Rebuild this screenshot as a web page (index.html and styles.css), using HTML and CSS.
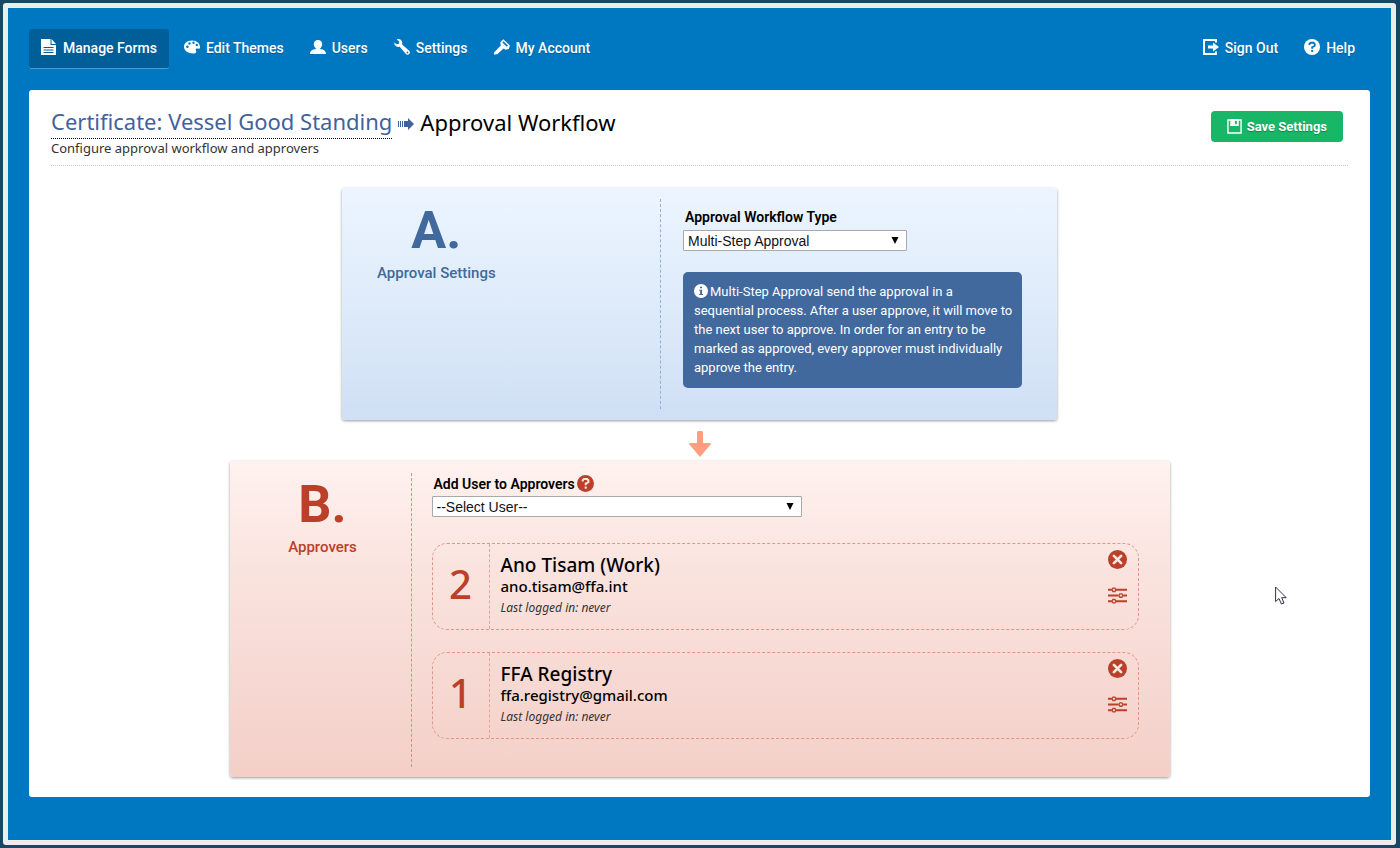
FILE: index.html
```html
<!DOCTYPE html>
<html lang="en">
<head>
<meta charset="utf-8">
<meta name="viewport" content="width=device-width, initial-scale=1">
<title>Approval Workflow</title>
<link rel="stylesheet" href="styles.css">
</head>
<body>
<svg class="sprite" aria-hidden="true">
  <symbol id="help" viewBox="0 0 16 16"><circle cx="8" cy="8" r="8" fill="currentColor"/><path class="cut" d="M5.4 6.1V4.8L6.6 3.7H9.5L10.7 4.9V6.8L8.2 8.2V9.7" fill="none" stroke-width="1.9"/><path class="cut" d="M8.2 10.9V12.9" fill="none" stroke-width="2"/></symbol>
  <symbol id="remove" viewBox="0 0 20 20"><circle cx="10" cy="10" r="10" fill="currentColor"/><path class="cut" d="M6.2 6.2 13.8 13.8M13.8 6.2 6.2 13.8" stroke-width="2.8" stroke-linecap="round"/></symbol>
  <symbol id="sliders" viewBox="0 0 20 18"><g fill="none" stroke="currentColor" stroke-width="2"><path d="M0 3H4M8 3H20M0 9H11M16 9H20M0 15H4M8 15H20"/><path stroke-width="1.4" d="M5.2 1.2H7.3L8.3 3 7.3 4.8H5.2L4.2 3ZM12.5 7.2H14.6L15.6 9 14.6 10.8H12.5L11.5 9ZM5.2 13.2H7.3L8.3 15 7.3 16.8H5.2L4.2 15Z"/></g></symbol>
</svg>
<div class="shell">
  <nav class="nav" aria-label="Main">
    <a class="nav-link active" href="#"><svg viewBox="0 0 16 16"><path fill="currentColor" fill-rule="evenodd" d="M0 0H9.5V6H15V16H0ZM2.5 8V9H12.5V8ZM2.5 10.5V11.5H12.5V10.5ZM2.5 13V14H12.5V13Z"/><path fill="currentColor" d="M10.5 0 15 5H10.5Z"/></svg>Manage Forms</a>
    <a class="nav-link" href="#"><svg viewBox="0 0 16 16"><path fill="currentColor" fill-rule="evenodd" d="M8 1.5C13 1.5 16 4.6 16 8.2c0 1.4-1 1.8-2.5 1.4-1.3-.4-2.2.3-1.6 1.6.8 1.7.3 3.3-2.6 3.3C4.3 14.5 0 12 0 7.8 0 4.3 3.4 1.5 8 1.5ZM2.1 7.8a1.3 1.3 0 1 0 2.6 0 1.3 1.3 0 1 0-2.6 0ZM4.3 4.5a1.2 1.2 0 1 0 2.4 0 1.2 1.2 0 1 0-2.4 0ZM8.3 3.8a1.2 1.2 0 1 0 2.4 0 1.2 1.2 0 1 0-2.4 0ZM11.6 6a1.2 1.2 0 1 0 2.4 0 1.2 1.2 0 1 0-2.4 0Z"/></svg>Edit Themes</a>
    <a class="nav-link" href="#"><svg viewBox="0 0 16 16"><path fill="currentColor" d="M8 1C10.6 1 12.3 2.8 12.2 5.2 12.1 7.2 11 8.6 10.2 9.2V10C13 10.4 16 11.5 16 15H0C0 11.5 3 10.4 5.8 10V9.2C5 8.6 3.9 7.2 3.8 5.2 3.7 2.8 5.4 1 8 1Z"/></svg>Users</a>
    <a class="nav-link" href="#"><svg viewBox="0 0 16 16"><path fill="currentColor" fill-rule="evenodd" d="M2.8.4C5.8-.7 9 1.6 8.1 5.4L15.2 11.7C17.3 13.8 14.1 17.2 11.9 15L5.7 7.8C3 8.4.3 6.7.1 3.4L2.6 5.3 5.1 4.7 5.2 2.6ZM12.5 13.5a.9.9 0 1 0 1.8 0 .9.9 0 1 0-1.8 0Z"/></svg>Settings</a>
    <a class="nav-link" href="#"><svg viewBox="0 0 16 16"><path fill="currentColor" fill-rule="evenodd" d="M9.3.3 15.9 6.5 14.8 10 11.6 10.8 9.5 9.5 3.5 15 .2 15.8 0 13.4 6.8 6.6 6.3 3.2ZM9.5 2.2 8.4 3.4 12.7 7.8 14 6.7Z"/></svg>My Account</a>
    <span class="nav-space"></span>
    <a class="nav-link" href="#"><svg viewBox="0 0 16 16"><path fill="none" stroke="currentColor" stroke-width="2" d="M13 3.5V1H1V15H13V12.5"/><path fill="currentColor" d="M5 6.5H10V3.5L16 8 10 12.5V9.5H5Z"/></svg>Sign Out</a>
    <a class="nav-link" href="#"><svg class="on-blue"><use href="#help"/></svg>Help</a>
  </nav>
  <main class="page">
    <header class="head">
      <div>
        <h1 class="title"><a href="#">Certificate: Vessel Good Standing</a><svg class="crumb" viewBox="0 0 16 12"><path fill="currentColor" d="M0 3H1V9H0ZM2 3H3V9H2ZM4 3H5V9H4ZM6 3H10V0L16 6 10 12V9H6Z"/></svg>Approval Workflow</h1>
        <p class="subtitle">Configure approval workflow and approvers</p>
      </div>
      <button class="save" type="button"><svg viewBox="0 0 16 16"><path fill="none" stroke="currentColor" stroke-width="1.5" d="M1 1H15V15H1Z"/><path fill="currentColor" fill-rule="evenodd" d="M3.5 0H12.5V7.5H3.5ZM8.5 1.5V5.5H10.5V1.5Z"/></svg>Save Settings</button>
    </header>

    <section class="panel settings">
      <div class="step step-a">
        <h2><span class="letter">A.</span>Approval Settings</h2>
      </div>
      <div class="settings-body">
        <label class="label" for="type">Approval Workflow Type</label>
        <div class="select type-select">
          <select id="type"><option>Multi-Step Approval</option></select>
          <svg viewBox="0 0 8 8"><path d="M0 0H8L4 8Z"/></svg>
        </div>
        <p class="note"><svg viewBox="0 0 14 14"><circle cx="7" cy="7" r="7" fill="currentColor"/><path fill="#41699d" d="M6 2.7H8V4.3H6ZM5.3 5.7H8V10H9V11H5.3V10H6.2V6.7H5.3Z"/></svg>Multi-Step Approval send the approval in a sequential process. After a user approve, it will move to the next user to approve. In order for an entry to be marked as approved, every approver must individually approve the entry.</p>
      </div>
    </section>

    <svg class="down" viewBox="0 0 22 26"><path fill="currentColor" d="M8 1 9 0H13L14 1V12H21L22 13 11 26 0 13 1 12H8Z"/></svg>

    <section class="panel approvers">
      <div class="step step-b">
        <h2><span class="letter">B.</span>Approvers</h2>
      </div>
      <div class="approvers-body">
        <div class="label-row"><label class="label" for="user">Add User to Approvers</label><svg class="on-pink"><use href="#help"/></svg></div>
        <div class="select user-select">
          <select id="user"><option>--Select User--</option></select>
          <svg viewBox="0 0 8 8"><path d="M0 0H8L4 8Z"/></svg>
        </div>
        <ul class="list">
          <li class="card">
            <span class="num">2</span>
            <div class="info"><h3>Ano Tisam (Work)</h3><p class="mail">ano.tisam@ffa.int</p><p class="last">Last logged in: never</p></div>
            <div class="actions">
              <button type="button" aria-label="Remove Ano Tisam"><svg class="on-pink"><use href="#remove"/></svg></button>
              <button type="button" aria-label="Approval rules for Ano Tisam"><svg><use href="#sliders"/></svg></button>
            </div>
          </li>
          <li class="card">
            <span class="num">1</span>
            <div class="info"><h3>FFA Registry</h3><p class="mail">ffa.registry@gmail.com</p><p class="last">Last logged in: never</p></div>
            <div class="actions">
              <button type="button" aria-label="Remove FFA Registry"><svg class="on-pink"><use href="#remove"/></svg></button>
              <button type="button" aria-label="Approval rules for FFA Registry"><svg><use href="#sliders"/></svg></button>
            </div>
          </li>
        </ul>
      </div>
    </section>
    <svg class="pointer" viewBox="0 0 12 19" aria-hidden="true"><path fill="#fff" stroke="#334" d="M.6 1V15.5L4 12.5 6.4 18 9 17 6.7 11.7H11.2Z"/></svg>
  </main>
</div>
</body>
</html>
```
FILE: styles.css
```css
* { box-sizing: border-box; }
body {
  margin: 0;
  min-height: 100vh;
  display: flex;
  padding: 3px 4px 3px 3px;
  background: #174766;
  color: #000;
  font-family: "Noto Sans", "Open Sans", sans-serif;
  font-size: 13px;
}
h1, h2, h3, p, ul { margin: 0; padding: 0; font-weight: 400; }
a { color: inherit; text-decoration: none; }
.sprite { position: absolute; width: 0; height: 0; }
.on-blue { --hole: #0078c1; }
.on-pink { --hole: #fbe6e1; }
.cut { stroke: var(--hole); }

.shell {
  flex: 1;
  border: 5px solid #ededed;
  border-radius: 3px;
  background: #0078c1;
  padding: 21px 21px 42px;
}
.nav { display: flex; gap: 4px; height: 40px; margin-bottom: 21px; padding-right: 4px; }
.nav-space { flex: 1; }
.nav-link {
  display: flex;
  align-items: center;
  gap: 6px;
  padding: 0 11px 2px;
  border-radius: 3px;
  color: #fff;
  font-family: Roboto, sans-serif;
  font-size: 14px;
  font-weight: 500;
  text-shadow: 0 1px 1px #005a92;
}
.nav-link svg { width: 16px; height: 16px; margin-bottom: 2px; }
.nav-link.active { padding: 0 12px 1px; background: #005f98; border-bottom: 1px solid #4da0d4; }

.page {
  position: relative;
  background: #fff;
  border-radius: 3px;
  padding: 15px 22px 20px;
}
.head {
  display: flex;
  justify-content: space-between;
  align-items: flex-start;
  border-bottom: 1px dotted #ccc;
  padding-bottom: 8px;
  margin-bottom: 22px;
}
.title { font-size: 22px; line-height: 32px; display: flex; align-items: center; }
.title a { color: #41629c; border-bottom: 1px dotted #000; padding-bottom: 1px; }
.crumb { width: 16px; height: 12px; margin: 4px 6px 0; color: #41629c; }
.subtitle { font-size: 13px; line-height: 18px; color: #333; }
.save {
  display: flex;
  align-items: center;
  gap: 5px;
  margin: 6px 5px 0 0;
  height: 31px;
  padding: 0 16px;
  border: 0;
  border-radius: 4px;
  background: #19b667;
  color: #fff;
  font: 700 13px Roboto, sans-serif;
  text-shadow: 0 1px 1px #128549;
}
.save svg { width: 15px; height: 15px; }

.panel {
  display: flex;
  margin: 0 auto;
  border-radius: 3px;
  box-shadow: 0 1px 3px rgba(0, 0, 0, .4);
}
.settings {
  max-width: 715px;
  min-height: 232px;
  padding: 11px 35px 11px 0;
  background: linear-gradient(#ecf5ff, #deebfa 50%, #cfdff4);
}
.step { text-align: center; font-family: Roboto, sans-serif; }
.step h2 { font-size: 15px; line-height: 20px; font-weight: 500; }
.letter { display: block; font-weight: 700; font-size: 52px; line-height: 64px; }
.step-a { flex: 1; display: flex; padding-left: 35px; color: #41699d; border-right: 1px dashed #8fb0d8; }
.settings-body { width: 361px; padding: 8px 0 0 22px; }
.label { font-family: Roboto, sans-serif; font-size: 14px; font-weight: 600; line-height: 20px; padding-left: 2px; }
.select { position: relative; }
.select select {
  appearance: none;
  display: block;
  width: 100%;
  height: 21px;
  border: 1px solid #a9a9a9;
  border-radius: 1px;
  padding: 0 4px;
  background: #fff;
  color: #111;
  font: 14px "Liberation Sans", Arial, sans-serif;
}
.select svg { position: absolute; right: 8px; top: 7px; width: 8px; height: 7px; pointer-events: none; }
.type-select { width: 224px; margin: 3px 0 21px; }
.note {
  padding: 10px 9px 11px 11px;
  border-radius: 5px;
  background: #41699d;
  color: #fff;
  font-family: Roboto, sans-serif;
  font-size: 13px;
  line-height: 19px;
}
.note svg { width: 14px; height: 14px; vertical-align: -2px; margin-right: 2px; }

.down { display: block; width: 22px; height: 26px; margin: 11px auto 4px; color: #ff9d7f; }

.approvers {
  max-width: 940px;
  min-height: 316px;
  padding: 12px 31px 10px 0;
  background: linear-gradient(#fff2ef, #fae3de 35%, #f4cfc8);
}
.step-b { width: 182px; padding-left: 5px; color: #bb402a; border-right: 1px dashed #dd8d80; }
.approvers-body { flex: 1; padding-left: 20px; }
.label-row { display: flex; align-items: center; gap: 2px; height: 21px; }
.label-row svg { width: 17px; height: 17px; color: #bb402a; }
.user-select { width: 370px; margin: 2px 0 26px; }
.list { list-style: none; display: grid; gap: 22px; }
.card {
  display: flex;
  min-height: 87px;
  border: 1px dashed #e0968a;
  border-radius: 15px;
}
.num {
  display: grid;
  place-items: center;
  width: 57px;
  padding-bottom: 6px;
  border-right: 1px dashed #e6a397;
  color: #bb402a;
  font-size: 40px;
  font-weight: 500;
}
.info { flex: 1; padding: 10px 0 0 11px; }
.info h3 { font-size: 19px; line-height: 23px; font-weight: 500; }
.mail { font-size: 15px; line-height: 18px; font-weight: 500; }
.last { font-size: 12px; line-height: 26px; font-style: italic; color: #333; }
.actions { display: flex; flex-direction: column; gap: 16px; padding: 5px 11px 0 0; }
.actions button { display: block; border: 0; padding: 0; background: none; color: #bb402a; height: 20px; }
.actions svg { display: block; width: 19px; height: 19px; }
.pointer { position: absolute; left: 1246px; top: 496px; width: 12px; height: 19px; }
```
